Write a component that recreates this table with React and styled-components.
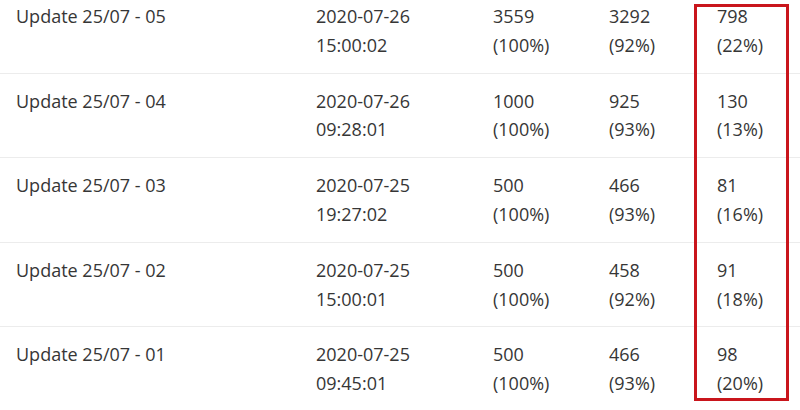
import styled, { createGlobalStyle } from 'styled-components';

const GlobalStyle = createGlobalStyle`
  html, body {
    margin: 0;
    padding: 0;
    background: #fff;
    overflow: hidden;
  }
  body {
    font-family: "Open Sans", "Noto Sans", sans-serif;
  }
`

const rows = [
  { name: 'Update 25/07 - 05', date: '2020-07-26', time: '15:00:02', sent: 3559, sentPct: 100, open: 3292, openPct: 92, click: 798, clickPct: 22 },
  { name: 'Update 25/07 - 04', date: '2020-07-26', time: '09:28:01', sent: 1000, sentPct: 100, open: 925, openPct: 93, click: 130, clickPct: 13 },
  { name: 'Update 25/07 - 03', date: '2020-07-25', time: '19:27:02', sent: 500, sentPct: 100, open: 466, openPct: 93, click: 81, clickPct: 16 },
  { name: 'Update 25/07 - 02', date: '2020-07-25', time: '15:00:01', sent: 500, sentPct: 100, open: 458, openPct: 92, click: 91, clickPct: 18 },
  { name: 'Update 25/07 - 01', date: '2020-07-25', time: '09:45:01', sent: 500, sentPct: 100, open: 466, openPct: 93, click: 98, clickPct: 20 },
]

const App = () => {
  return (
    <>
      <GlobalStyle />
      <Wrapper>
        <Table>
          {rows.map((r) => (
            <Row key={r.name}>
              <Cell>{r.name}</Cell>
              <Cell>{r.date}<br />{r.time}</Cell>
              <Cell>{r.sent}<br />({r.sentPct}%)</Cell>
              <Cell>{r.open}<br />({r.openPct}%)</Cell>
              <Cell>{r.click}<br />({r.clickPct}%)</Cell>
            </Row>
          ))}
        </Table>
        {/* highlight around the click column */}
        <Highlight />
      </Wrapper>
    </>
  )
}

const Wrapper = styled.div`
  position: relative;
  width: 800px;
  height: 410px;
  overflow: hidden;
`

const Table = styled.div`
  margin-top: -11px;
  display: flex;
  flex-direction: column;
`

const Row = styled.div`
  display: grid;
  grid-template-columns: 300px 177px 116px 108px 99px;
  border-bottom: 1px solid #ececec;
`

const Cell = styled.div`
  padding: 13px 0 13px 16px;
  font-size: 18px;
  line-height: 28.8px;
  color: #363636;
`

const Highlight = styled.div`
  position: absolute;
  left: 694px;
  top: 4px;
  width: 95px;
  height: 397px;
  box-sizing: border-box;
  border: 3px solid #c9151c;
  pointer-events: none;
`

export default App
